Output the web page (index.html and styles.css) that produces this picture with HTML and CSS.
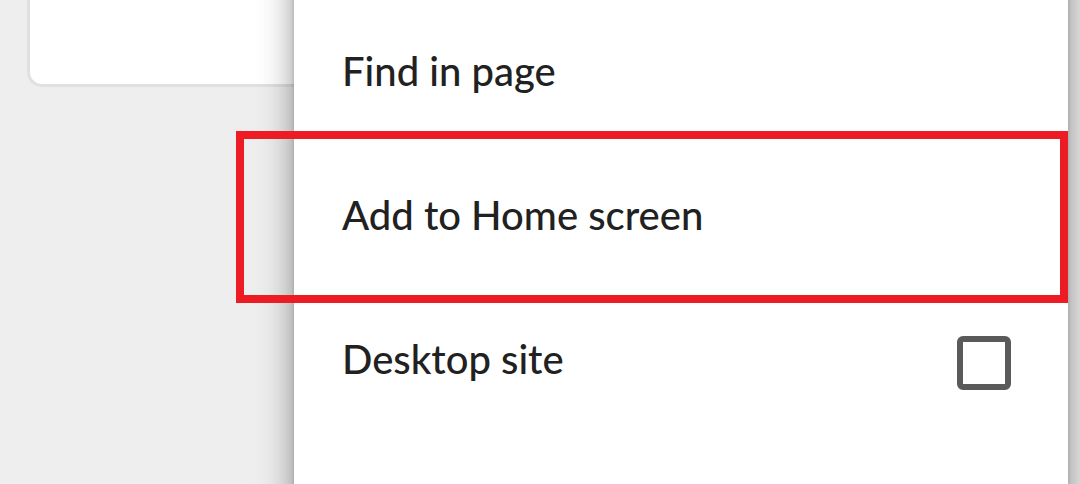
FILE: index.html
```html
<!DOCTYPE html>
<html lang="en">
<head>
<meta charset="utf-8">
<meta name="viewport" content="width=device-width, initial-scale=1">
<title>Browser menu</title>
<link rel="stylesheet" href="styles.css">
</head>
<body>
<main class="page">
  <div class="card"></div>
  <div class="menu">
    <button class="item" type="button">Find in page</button>
    <button class="item highlighted" type="button">Add to Home screen</button>
    <label class="item" for="desktop-site">
      <span>Desktop site</span>
      <input class="checkbox" type="checkbox" id="desktop-site">
    </label>
  </div>
</main>
</body>
</html>
```

FILE: styles.css
```css
* {
  box-sizing: border-box;
}

body {
  margin: 0;
  background: #eeeeee;
  color: #212121;
  font-family: Lato, "Open Sans", sans-serif;
}

.page {
  display: grid;
  grid-template-columns: 27px 267px 1fr 12px;
  min-height: 100vh;
  overflow: hidden;
}

.card {
  grid-area: 1 / 2 / 2 / 4;
  height: 87px;
  border: solid #e0e0e0;
  border-width: 0 0 3px 3px;
  border-radius: 0 0 0 15px;
  background: #ffffff;
}

.menu {
  grid-area: 1 / 3 / 2 / 4;
  position: relative;
  z-index: 0;
  display: flex;
  flex-direction: column;
  background: #ffffff;
}

/* Shadow continues past the top and bottom of the scrolled menu. */
.menu::before {
  content: "";
  position: absolute;
  inset: -80px 0;
  z-index: -1;
  box-shadow: 0 0 32px rgba(0, 0, 0, 0.42), 0 0 4px rgba(0, 0, 0, 0.16);
}

.item {
  position: relative;
  display: flex;
  align-items: center;
  justify-content: space-between;
  min-height: 144px;
  padding: 0 57px 2px 48px;
  border: 0;
  background: #ffffff;
  color: inherit;
  font-family: inherit;
  font-size: 40px;
  font-weight: 500;
  line-height: 48px;
  text-align: left;
}

.highlighted {
  z-index: 1;
}

.highlighted::after {
  content: "";
  position: absolute;
  inset: -13px 0 -15px -58px;
  border: 8px solid #ed1c24;
}

.checkbox {
  appearance: none;
  width: 54px;
  height: 54px;
  margin: 8px 0 0;
  border: 6px solid #5a5a5a;
  border-radius: 6px;
  background: #ffffff;
}

.checkbox:checked {
  background: #5a5a5a;
}
```
